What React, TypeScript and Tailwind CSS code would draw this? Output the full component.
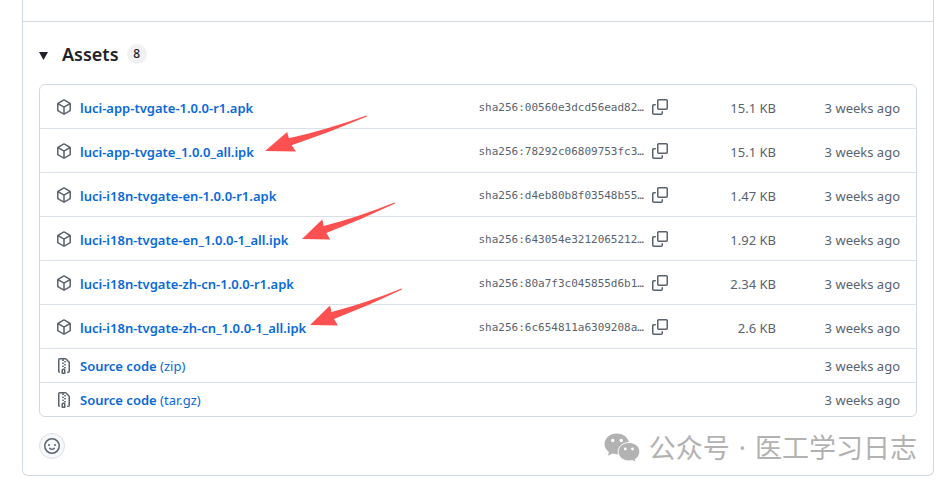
import type { ReactNode } from "react"

type Asset = {
  name: string
  digest: string
  size: string
  arrow?: string
}

const assets: Asset[] = [
  { name: "luci-app-tvgate-1.0.0-r1.apk", digest: "sha256:00560e3dcd56ead82…", size: "15.1 KB" },
  {
    name: "luci-app-tvgate_1.0.0_all.ipk",
    digest: "sha256:78292c06809753fc3…",
    size: "15.1 KB",
    arrow: "left-[225px] -top-[14px] w-[102px] h-[37px]",
  },
  { name: "luci-i18n-tvgate-en-1.0.0-r1.apk", digest: "sha256:d4eb80b8f03548b55…", size: "1.47 KB" },
  {
    name: "luci-i18n-tvgate-en_1.0.0-1_all.ipk",
    digest: "sha256:643054e3212065212…",
    size: "1.92 KB",
    arrow: "left-[262px] -top-[15px] w-[93px] h-[38px]",
  },
  { name: "luci-i18n-tvgate-zh-cn-1.0.0-r1.apk", digest: "sha256:80a7f3c045855d6b1…", size: "2.34 KB" },
  {
    name: "luci-i18n-tvgate-zh-cn_1.0.0-1_all.ipk",
    digest: "sha256:6c654811a6309208a…",
    size: "2.6 KB",
    arrow: "left-[270px] -top-[17px] w-[92px] h-[38px]",
  },
]

const sources = ["zip", "tar.gz"]

const Icon = ({ children }: { children: ReactNode }) => (
  <svg className="h-4 w-4 shrink-0 fill-[#59636e]" viewBox="0 0 16 16" aria-hidden="true">
    {children}
  </svg>
)

const PackageIcon = () => (
  <Icon>
    <path d="m8.878.392 5.25 3.045c.54.314.872.89.872 1.514v6.098a1.75 1.75 0 0 1-.872 1.514l-5.25 3.045a1.75 1.75 0 0 1-1.756 0l-5.25-3.045A1.75 1.75 0 0 1 1 11.049V4.951c0-.624.332-1.201.872-1.514L7.122.392a1.75 1.75 0 0 1 1.756 0ZM7.875 1.69l-4.63 2.685L8 7.133l4.755-2.758-4.63-2.685a.248.248 0 0 0-.25 0ZM2.5 5.677v5.372c0 .09.047.171.125.216l4.625 2.683V8.432Zm6.25 8.271 4.625-2.683a.25.25 0 0 0 .125-.216V5.677L8.75 8.432Z" />
  </Icon>
)

const CopyIcon = () => (
  <Icon>
    <path d="M0 6.75C0 5.784.784 5 1.75 5h1.5a.75.75 0 0 1 0 1.5h-1.5a.25.25 0 0 0-.25.25v7.5c0 .138.112.25.25.25h7.5a.25.25 0 0 0 .25-.25v-1.5a.75.75 0 0 1 1.5 0v1.5A1.75 1.75 0 0 1 9.25 16h-7.5A1.75 1.75 0 0 1 0 14.25Z" />
    <path d="M5 1.75C5 .784 5.784 0 6.75 0h7.5C15.216 0 16 .784 16 1.75v7.5A1.75 1.75 0 0 1 14.25 11h-7.5A1.75 1.75 0 0 1 5 9.25Zm1.75-.25a.25.25 0 0 0-.25.25v7.5c0 .138.112.25.25.25h7.5a.25.25 0 0 0 .25-.25v-7.5a.25.25 0 0 0-.25-.25Z" />
  </Icon>
)

const ZipIcon = () => (
  <Icon>
    <path d="M3.5 1.75v11.5c0 .09.048.173.126.217a.75.75 0 0 1-.752 1.298A1.748 1.748 0 0 1 2 13.25V1.75C2 .784 2.784 0 3.75 0h5.586c.464 0 .909.185 1.237.513l2.914 2.914c.329.328.513.773.513 1.237v8.586A1.75 1.75 0 0 1 12.25 15h-.5a.75.75 0 0 1 0-1.5h.5a.25.25 0 0 0 .25-.25V4.664a.25.25 0 0 0-.073-.177L9.513 1.573a.25.25 0 0 0-.177-.073H7.25a.75.75 0 0 1 0 1.5h-.5a.75.75 0 0 1 0-1.5h-3a.25.25 0 0 0-.25.25Zm3.75 8.75h.5c.966 0 1.75.784 1.75 1.75v3a.75.75 0 0 1-.75.75h-2.5a.75.75 0 0 1-.75-.75v-3c0-.966.784-1.75 1.75-1.75ZM6 5.25a.75.75 0 0 1 .75-.75h.5a.75.75 0 0 1 0 1.5h-.5A.75.75 0 0 1 6 5.25Zm.75 2.25h.5a.75.75 0 0 1 0 1.5h-.5a.75.75 0 0 1 0-1.5ZM8 6.75A.75.75 0 0 1 8.75 6h.5a.75.75 0 0 1 0 1.5h-.5A.75.75 0 0 1 8 6.75ZM8.75 3h.5a.75.75 0 0 1 0 1.5h-.5a.75.75 0 0 1 0-1.5ZM8 9.75A.75.75 0 0 1 8.75 9h.5a.75.75 0 0 1 0 1.5h-.5A.75.75 0 0 1 8 9.75Zm-1 2.5v2.25h1v-2.25a.25.25 0 0 0-.25-.25h-.5a.25.25 0 0 0-.25.25Z" />
  </Icon>
)

const SmileyIcon = () => (
  <Icon>
    <path d="M8 0a8 8 0 1 1 0 16A8 8 0 0 1 8 0ZM1.5 8a6.5 6.5 0 1 0 13 0 6.5 6.5 0 0 0-13 0Zm3.82 1.636a.75.75 0 0 1 1.038.175l.007.009c.103.118.22.222.35.31.264.178.683.37 1.285.37.602 0 1.02-.192 1.285-.371.13-.088.247-.192.35-.31l.007-.008a.75.75 0 0 1 1.222.87c-.06.08-.13.16-.2.24-.16.166-.338.316-.53.445-.63.418-1.37.638-2.127.629-.946 0-1.652-.308-2.126-.63a3.331 3.331 0 0 1-.73-.68.75.75 0 0 1 .184-1.044ZM12 7a1 1 0 1 1-2 0 1 1 0 0 1 2 0ZM5 8a1 1 0 1 1 0-2 1 1 0 0 1 0 2Z" />
  </Icon>
)

const Arrow = ({ className }: { className: string }) => (
  <svg
    className={`absolute pointer-events-none z-10 fill-[#fc5150] ${className}`}
    viewBox="0 0 92 38"
    preserveAspectRatio="none"
    aria-hidden="true"
  >
    <path d="M0 37 20 17.500 21.500 24Q56 15 91.500 0.500L92 1.500Q58 18 24 31L28 37.500Z" />
  </svg>
)

const WeChatIcon = () => (
  <svg className="h-[30px] w-9 shrink-0" viewBox="0 0 36 30" fill="#b2b2b2" aria-hidden="true">
    <path d="M12.800.500C6 .500.500 5.200.500 11c0 3.200 1.700 6 4.400 8L4 22.800l4.500-2.200c1.400.4 2.800.7 4.300.7 6.900 0 12.400-4.600 12.400-10.300S19.700.500 12.800.500Z" />
    <path
      d="M25 9.500c-6 0-10.800 4-10.800 9.200S19 28 25 28c1.300 0 2.500-.2 3.600-.5L32 29.500l-.8-3.200c2.800-1.700 4.600-4.500 4.600-7.600 0-5.200-4.800-9.200-10.800-9.200Z"
      stroke="#fff"
      strokeWidth="1"
    />
    <g fill="#fff">
      <circle cx="8.700" cy="7.500" r="1.700" />
      <circle cx="17.200" cy="7.500" r="1.700" />
      <circle cx="21.300" cy="16" r="1.400" />
      <circle cx="28.500" cy="16" r="1.400" />
    </g>
  </svg>
)

const App = () => {
  return (
    <div className="pl-[22px] pr-[13px] pb-3 bg-white text-[13px] leading-5 text-[#59636e] font-['Noto_Sans','Noto_Sans_CJK_SC',sans-serif]">
      <div className="border border-t-0 border-[#d1d9e0] rounded-b-md">
        <div className="h-[21px]" />
        <div className="border-t border-[#d1d9e0] px-4 pt-4 pb-4">
          <details open>
            <summary className="flex items-center h-8 cursor-pointer list-none text-[#1f2328]">
              <svg className="mt-1 h-2 w-[9px] fill-current" viewBox="0 0 9 8" aria-hidden="true">
                <path d="M0 0h9L4.500 8Z" />
              </svg>
              <h3 className="ml-[14px] text-lg font-semibold">Assets</h3>
              <span className="ml-2 flex items-center justify-center h-5 min-w-5 px-1 rounded-full bg-[#eff1f3] text-xs font-medium">
                8
              </span>
            </summary>
            <ul className="mt-[14px] border border-[#d1d9e0] rounded-md divide-y divide-[#dae0e7]">
              {assets.map((asset) => (
                <li key={asset.name} className="relative flex items-center h-11 px-4">
                  <PackageIcon />
                  <a href="#" className="ml-2 mt-0.5 font-semibold text-[#0969da] hover:underline">
                    {asset.name}
                  </a>
                  {asset.arrow && <Arrow className={asset.arrow} />}
                  <span className="ml-auto mt-0.5 text-[11px] font-['DejaVu_Sans_Mono',monospace]">
                    {asset.digest}
                  </span>
                  <button type="button" aria-label="Copy digest" className="ml-2 cursor-pointer">
                    <CopyIcon />
                  </button>
                  <span className="mt-0.5 w-[108px] text-right">{asset.size}</span>
                  <span className="mt-0.5 w-[124px] text-right">3 weeks ago</span>
                </li>
              ))}
              {sources.map((ext) => (
                <li key={ext} className="flex items-center h-[34px] last:h-[33px] px-4">
                  <ZipIcon />
                  <a href="#" className="ml-2 text-[#0969da] hover:underline">
                    <span className="font-semibold">Source code</span> ({ext})
                  </a>
                  <span className="ml-auto">3 weeks ago</span>
                </li>
              ))}
            </ul>
          </details>
          <div className="mt-4 flex items-center justify-between">
            <button
              type="button"
              aria-label="Add a reaction"
              className="flex items-center justify-center h-[26px] w-[26px] rounded-full border border-[#dae0e7] bg-[#f6f8fa] cursor-pointer"
            >
              <SmileyIcon />
            </button>
            <div className="flex items-center h-[26px] pt-1 gap-[9px] text-[27px] text-[#b2b2b2]">
              <WeChatIcon />
              <span>公众号</span>
              <span>·</span>
              <span>医工学习日志</span>
            </div>
          </div>
        </div>
      </div>
    </div>
  )
}

export default App
